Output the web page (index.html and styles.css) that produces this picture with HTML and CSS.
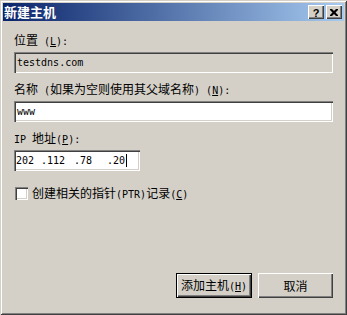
FILE: index.html
```html
<!DOCTYPE html>
<html lang="zh-CN">
<head>
<meta charset="utf-8">
<title>新建主机</title>
<link rel="stylesheet" href="styles.css">
</head>
<body>
<div class="win">
  <div class="title">
    <span class="title-text">新建主机</span>
    <div class="caps">
      <span class="cap cap-help">?</span>
      <span class="cap cap-close"><svg width="8" height="7" viewBox="0 0 8 7"><path d="M0 0h2l2 2 2-2h2v1l-2.5 2.5L8 6v1H6L4 5 2 7H0V6l2.5-2.5L0 1z" fill="#000"/></svg></span>
    </div>
  </div>
  <div class="content">
    <div class="label">位置<span class="m"> (<u>L</u>):</span></div>
    <div class="field ro"><span class="m">testdns.com</span></div>

    <div class="label gap">名称<span class="m"> (</span>如果为空则使用其父域名称<span class="m">) (<u>N</u>):</span></div>
    <div class="field"><span class="m">www</span></div>

    <div class="label gap"><span class="m">IP </span>地址<span class="m">(<u>P</u>):</span></div>
    <div class="field ip">
      <span class="seg s1 m">202</span><span class="seg s2 m">.112</span><span class="seg s3 m">.78</span><span class="seg m">.20</span><span class="caret"></span>
    </div>

    <div class="check-row">
      <span class="checkbox"></span>
      <span class="check-label">创建相关的指针<span class="m">(PTR)</span>记录<span class="m">(<u>C</u>)</span></span>
    </div>

    <div class="buttons">
      <div class="btn default"><span class="btn-inner">添加主机<span class="m">(<u>H</u>)</span></span></div>
      <div class="btn"><span class="btn-inner">取消</span></div>
    </div>
  </div>
</div>
</body>
</html>
```
FILE: styles.css
```css
* { box-sizing: border-box; }
html, body { margin: 0; padding: 0; background: #D4D0C8; }
body {
  font-family: "Noto Sans CJK SC", "DejaVu Sans Mono", sans-serif;
  font-size: 12px;
  color: #000;
}
.m { font-family: "DejaVu Sans Mono", "Liberation Mono", monospace; font-size: 10px; }
u { text-decoration: underline; text-underline-offset: 1px; }

.win {
  width: 347px;
  height: 315px;
  background: #D4D0C8;
  padding: 3px;
  display: flex;
  flex-direction: column;
  box-shadow: inset 1px 1px #D4D0C8, inset -1px -1px #404040, inset 2px 2px #FFFFFF, inset -2px -2px #808080;
}

.title {
  height: 18px;
  background: linear-gradient(to right, #0A246A, #A6CAF0);
  display: flex;
  align-items: center;
  padding: 0 2px 0 1px;
}
.title-text {
  color: #fff;
  font-weight: bold;
  font-size: 13px;
  line-height: 18px;
}
.caps { margin-left: auto; display: flex; }
.cap {
  width: 16px;
  height: 14px;
  background: #D4D0C8;
  box-shadow: inset 1px 1px #FFFFFF, inset -1px -1px #404040, inset -2px -2px #808080;
  display: flex;
  align-items: center;
  justify-content: center;
}
.cap-help {
  font-family: "Liberation Sans", sans-serif;
  font-weight: bold;
  font-size: 11px;
  line-height: 14px;
  padding-top: 1px;
}
.cap-close { margin-left: 2px; padding-top: 1px; }
.cap-close svg { display: block; }

.content {
  flex: 1;
  display: flex;
  flex-direction: column;
  padding: 0 11px 14px 11px;
}
.label { line-height: 14px; height: 14px; margin-top: 12px; white-space: nowrap; }
.label.gap { margin-top: 9px; }

.field {
  height: 21px;
  margin-top: 5px;
  background: #fff;
  box-shadow: inset 1px 1px #808080, inset 2px 2px #404040, inset -1px -1px #FFFFFF, inset -2px -2px #D4D0C8;
  display: flex;
  align-items: center;
  padding-left: 3px;
  line-height: 14px;
}
.field.ro { background: #D4D0C8; }
.field.ip { width: 126px; padding-left: 2px; }
.seg { display: inline-block; white-space: pre; }
.s1 { width: 25px; }
.s2 { width: 33px; }
.s3 { width: 33px; }
.caret { width: 1px; height: 13px; background: #000; margin-left: 1px; }

.check-row {
  margin-top: 15px;
  display: flex;
  align-items: center;
  height: 15px;
}
.checkbox {
  width: 13px;
  height: 13px;
  margin-left: 1px;
  background: #fff;
  box-shadow: inset 1px 1px #808080, inset 2px 2px #404040, inset -1px -1px #FFFFFF, inset -2px -2px #D4D0C8;
}
.check-label { margin-left: 4px; line-height: 14px; white-space: nowrap; }

.buttons {
  margin-top: auto;
  display: flex;
  justify-content: flex-end;
  gap: 6px;
}
.btn {
  width: 75px;
  height: 25px;
  background: #D4D0C8;
  box-shadow: inset 1px 1px #FFFFFF, inset -1px -1px #404040, inset -2px -2px #808080;
  display: flex;
  align-items: center;
  justify-content: center;
  line-height: 14px;
}
.btn.default {
  width: 76px;
  border: 1px solid #000;
}
.btn-inner { white-space: nowrap; padding-top: 1px; }
```
